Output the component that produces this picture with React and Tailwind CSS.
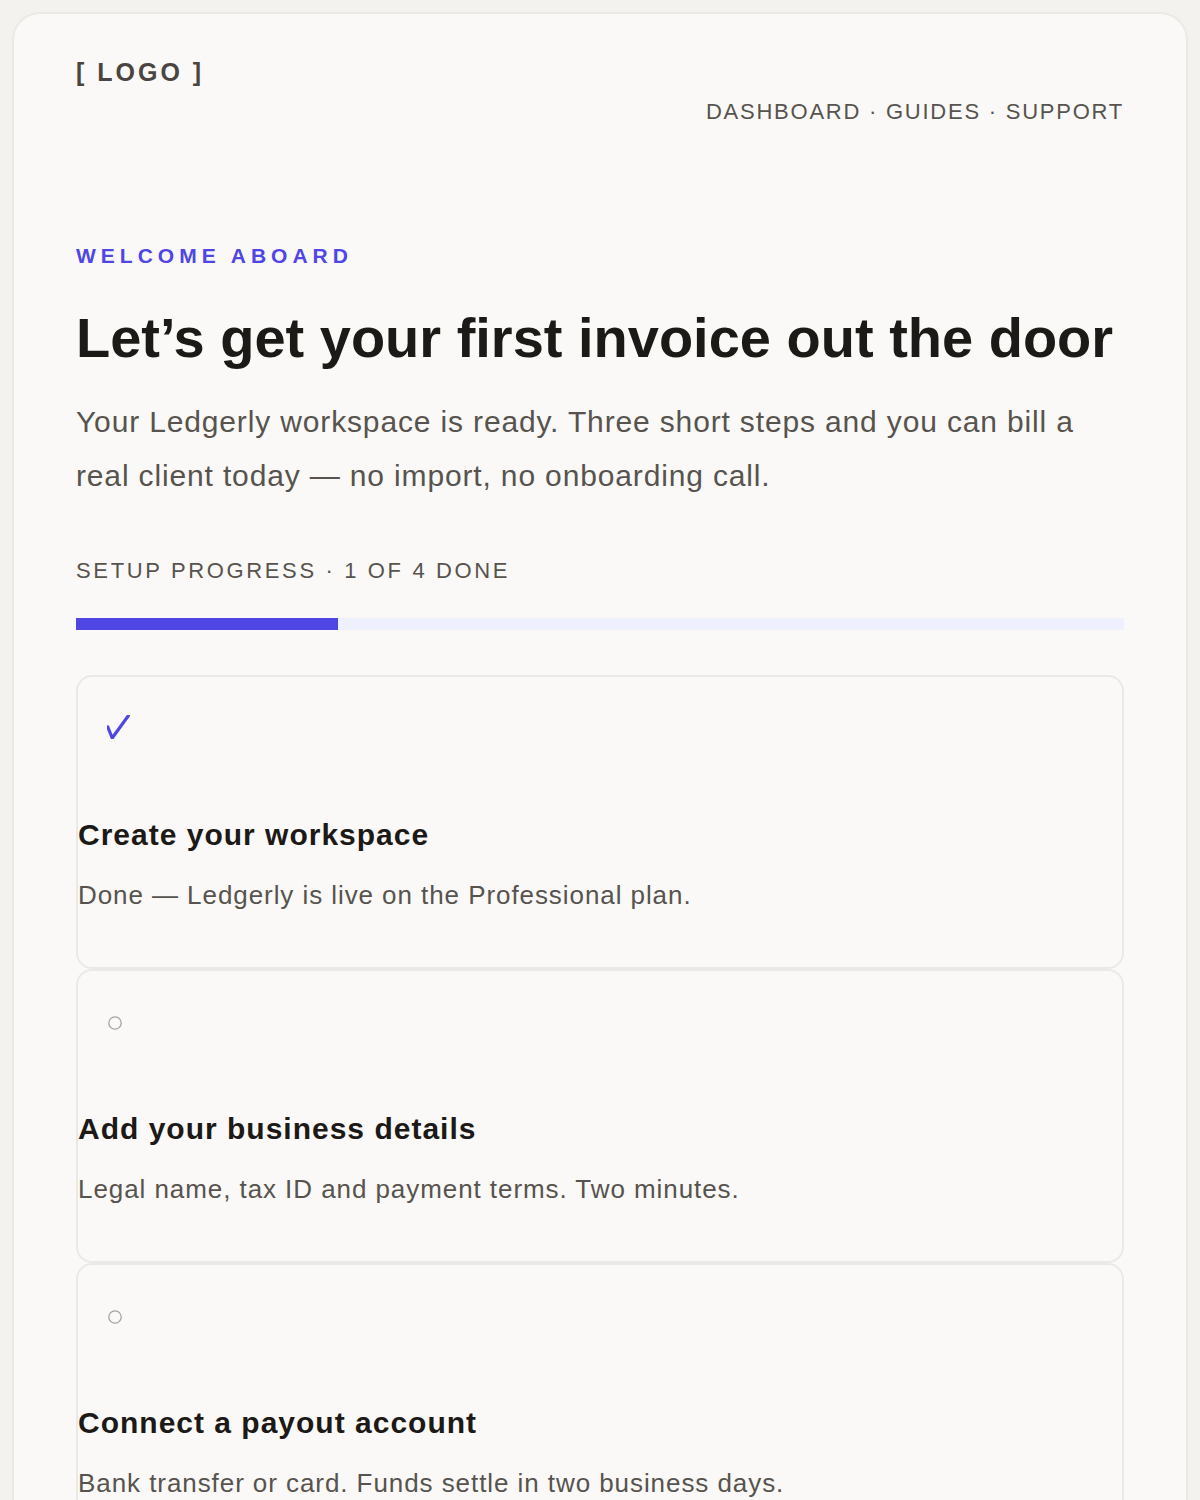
import React from 'react';

const steps = [
  { title: 'Create your workspace', text: 'Done — Ledgerly is live on the Professional plan.', done: true },
  { title: 'Add your business details', text: 'Legal name, tax ID and payment terms. Two minutes.', done: false },
  { title: 'Connect a payout account', text: 'Bank transfer or card. Funds settle in two business days.', done: false },
  { title: 'Send your first invoice', text: 'Pick a client, add a line item and hit send.', done: false },
];

const CheckMark = () => (
  <svg width="24" height="24" viewBox="0 0 24 24" fill="none">
    <path
      d="M0.8 12 L5.2 23 L21.3 0.8"
      stroke="#4f46e5"
      strokeWidth="3.2"
      strokeLinecap="round"
      strokeLinejoin="round"
    />
  </svg>
);

const OpenCircle = () => (
  <svg width="24" height="24" viewBox="0 0 24 24" fill="none">
    <circle cx="8" cy="14" r="6.2" stroke="#a8a29e" strokeWidth="1.3" />
  </svg>
);

const StepCard = ({ step }) => (
  <div className="rounded-2xl border-2 border-[#ebe9e5] pb-[54px]">
    <div className="pl-[29px] pt-[38px]">{step.done ? <CheckMark /> : <OpenCircle />}</div>
    <h3 className="mt-[78px] text-[30px] font-bold leading-[36px] tracking-[1px] text-[#1c1917]">{step.title}</h3>
    <p className="mt-[24px] text-[26px] leading-[36px] tracking-[0.93px] text-[#57534e]">{step.text}</p>
  </div>
);

export default function App() {
  return (
    <div className="min-h-screen bg-[#f3f2ef] p-3 font-['Liberation_Sans',Arial,sans-serif]">
      <div className="rounded-[28px] border-2 border-[#ebe9e5] bg-[#faf9f7] px-[62px] pt-[42px] pb-16">
        <header className="flex items-start justify-between">
          <div className="text-[25px] font-bold leading-[32px] tracking-[3px] text-[#4a4540]">[ LOGO ]</div>
          <nav className="mt-[42px] text-[22px] leading-[28px] tracking-[0.08em] text-[#57534e]">
            DASHBOARD · GUIDES · SUPPORT
          </nav>
        </header>

        <div className="mt-[116px] text-[21px] font-bold leading-[28px] tracking-[5px] text-[#4f46e5]">
          WELCOME ABOARD
        </div>
        <h1 className="mt-[36px] text-[56px] font-bold leading-[64px] text-[#1c1a17]">
          Let’s get your first invoice out the door
        </h1>
        <p className="mt-[25px] text-[30px] leading-[54px] tracking-[0.85px] text-[#57534e]">
          Your Ledgerly workspace is ready. Three short steps and you can bill a real client today — no import, no
          onboarding call.
        </p>

        <div className="mt-[54px] text-[22px] leading-[28px] tracking-[0.12em] text-[#57534e]">
          SETUP PROGRESS · 1 OF 4 DONE
        </div>
        <div className="mt-[33px] flex h-3 bg-[#eef0fd]">
          <div className="h-full w-1/4 bg-[#4f46e5]" />
        </div>

        <div className="mt-[45px] flex flex-col">
          {steps.map((step) => (
            <StepCard key={step.title} step={step} />
          ))}
        </div>
      </div>
    </div>
  );
}
